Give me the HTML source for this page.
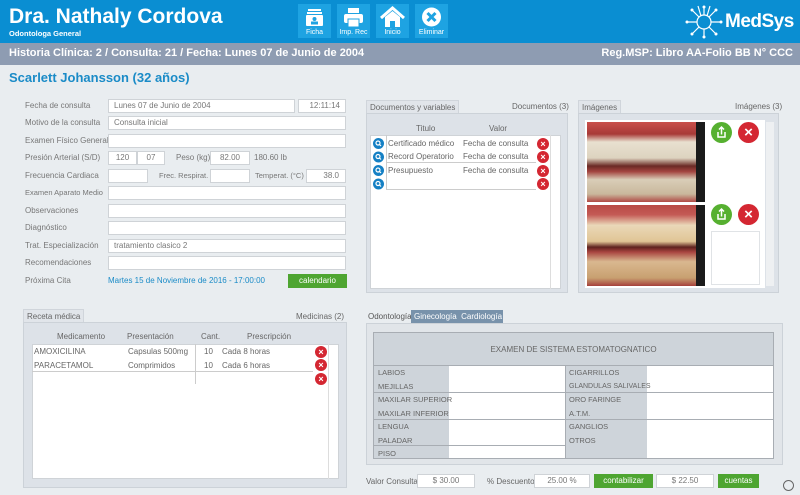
<!DOCTYPE html>
<html><head><meta charset="utf-8"><style>
*{box-sizing:border-box;margin:0;padding:0}
body{width:800px;height:495px;overflow:hidden;background:#e9edf0;font-family:"Liberation Sans",sans-serif;position:relative;color:#555}
.a{position:absolute;white-space:nowrap}
.hdr{left:0;top:0;width:800px;height:43px;background:#0a8ed2}
.bar{left:0;top:43px;width:800px;height:22px;background:#8e9cb2;color:#fff;font-weight:bold;font-size:11px;line-height:21px}
.btn{top:4px;width:33px;height:34px;background:#1ea3e2;color:#fff;font-size:7px;text-align:center}
.btn span{position:absolute;bottom:2px;left:0;width:100%}
.lbl{font-size:8px;color:#777;left:25px}
.in{background:#fff;border:1px solid #cfd3d7;height:14px;font-size:8px;color:#777;line-height:12px;padding-left:5px}
.tab{font-size:8px;color:#666;background:#e1e5ea;border:1px solid #d0d5db;border-bottom:none;height:14px;line-height:13px;padding:0 3px}
.pan{background:#dde2e8;border:1px solid #ccd2d8}
.x{width:12px;height:12px;border-radius:50%;background:#d42732;color:#fff;font-size:9px;line-height:12px;text-align:center;font-weight:bold}
.q{width:11px;height:11px;border-radius:50%;background:#1580c4}
.t{font-size:8px;color:#666}
.tr{font-size:7.5px;color:#666;height:13.5px;line-height:13.5px;padding-left:3px;white-space:nowrap}
</style></head><body>
<div class="a hdr"></div>
<div class="a" style="left:9px;top:5px;color:#fff;font-weight:bold;font-size:21px">Dra. Nathaly Cordova</div>
<div class="a" style="left:9px;top:29px;color:#fff;font-weight:bold;font-size:7.5px">Odontologa General</div>
<div class="a btn" style="left:298px"><svg width="33" height="26" viewBox="0 0 33 26"><rect x="10" y="5" width="13" height="2" fill="#fff"/><rect x="9" y="8" width="15" height="2" fill="#fff"/><rect x="8" y="11" width="17" height="11" rx="1" fill="#fff"/><circle cx="16.5" cy="15" r="2" fill="#1ea3e2"/><rect x="13" y="17.5" width="7" height="3" fill="#1ea3e2"/></svg><span>Ficha</span></div>
<div class="a btn" style="left:337px"><svg width="33" height="26" viewBox="0 0 33 26"><rect x="11" y="4" width="11" height="5" fill="#fff"/><rect x="7" y="10" width="19" height="9" rx="2" fill="#fff"/><rect x="11" y="15" width="11" height="8" fill="#fff" stroke="#1ea3e2" stroke-width="1"/></svg><span>Imp. Rec</span></div>
<div class="a btn" style="left:376px"><svg width="33" height="26" viewBox="0 0 33 26"><path d="M5 14 L16.5 4 L28 14" stroke="#fff" stroke-width="3" fill="none"/><path d="M9 13 V23 H14 V17 H19 V23 H24 V13 L16.5 7Z" fill="#fff"/></svg><span>Inicio</span></div>
<div class="a btn" style="left:415px"><svg width="33" height="26" viewBox="0 0 33 26"><circle cx="16.5" cy="13" r="9.5" fill="#fff"/><path d="M12.5 9 L20.5 17 M20.5 9 L12.5 17" stroke="#1ea3e2" stroke-width="3"/></svg><span>Eliminar</span></div>
<svg class="a" style="left:684px;top:4px" width="40" height="36" viewBox="0 0 40 36"><g stroke="#fff" stroke-width="1.2" fill="none"><circle cx="20" cy="18" r="7"/><path d="M20 11V3M20 25V33M13 18H3M27 18H37M15 13L8 6M25 13L32 6M15 23L8 30M25 23L32 30M17 12L14 2M23 12L26 2"/></g><g fill="#fff"><circle cx="20" cy="3" r="1.5"/><circle cx="3" cy="18" r="1.5"/><circle cx="37" cy="18" r="1.5"/><circle cx="8" cy="6" r="1.5"/><circle cx="32" cy="6" r="1.5"/><circle cx="8" cy="30" r="1.5"/><circle cx="32" cy="30" r="1.5"/><circle cx="20" cy="33" r="1.5"/></g></svg>
<div class="a" style="left:725px;top:11px;color:#fff;font-weight:bold;font-size:19px;letter-spacing:-0.5px">MedSys</div>
<div class="a bar"><span style="position:absolute;left:9px">Historia Clínica: 2 / Consulta: 21 / Fecha: Lunes 07 de Junio de 2004</span><span style="position:absolute;right:7px">Reg.MSP: Libro AA-Folio BB N° CCC</span></div>
<div class="a" style="left:9px;top:70px;color:#1a8bc7;font-weight:bold;font-size:13px">Scarlett Johansson (32 años)</div>

<div class="a lbl" style="top:101px">Fecha de consulta</div><div class="a in" style="left:108px;top:99px;width:187px">Lunes 07 de Junio de 2004</div><div class="a in" style="left:298px;top:99px;width:48px;text-align:right;padding-right:5px">12:11:14</div>
<div class="a lbl" style="top:118px">Motivo de la consulta</div><div class="a in" style="left:108px;top:116px;width:238px">Consulta inicial</div>
<div class="a lbl" style="top:136px">Examen Físico General</div><div class="a in" style="left:108px;top:134px;width:238px"></div>
<div class="a lbl" style="top:153px">Presión Arterial (S/D)</div><div class="a in" style="left:108px;top:151px;width:29px;text-align:center;padding:0">120</div><div class="a in" style="left:137px;top:151px;width:28px;text-align:center;padding:0">07</div><div class="a lbl" style="left:176px;top:153px">Peso (kg)</div><div class="a in" style="left:210px;top:151px;width:40px;text-align:center;padding:0">82.00</div><div class="a lbl" style="left:254px;top:153px">180.60 lb</div>
<div class="a lbl" style="top:171px">Frecuencia Cardiaca</div><div class="a in" style="left:108px;top:169px;width:40px"></div><div class="a lbl" style="left:159px;top:171px;font-size:7.5px">Frec. Respirat.</div><div class="a in" style="left:210px;top:169px;width:40px"></div><div class="a lbl" style="left:255px;top:171px;font-size:7.5px">Temperat. (°C)</div><div class="a in" style="left:306px;top:169px;width:40px;text-align:right;padding-right:6px">38.0</div>
<div class="a lbl" style="top:188px;font-size:7.5px">Examen Aparato Medio</div><div class="a in" style="left:108px;top:186px;width:238px"></div>
<div class="a lbl" style="top:206px">Observaciones</div><div class="a in" style="left:108px;top:204px;width:238px"></div>
<div class="a lbl" style="top:223px">Diagnóstico</div><div class="a in" style="left:108px;top:221px;width:238px"></div>
<div class="a lbl" style="top:241px">Trat. Especialización</div><div class="a in" style="left:108px;top:239px;width:238px">tratamiento clasico 2</div>
<div class="a lbl" style="top:258px">Recomendaciones</div><div class="a in" style="left:108px;top:256px;width:238px"></div>
<div class="a lbl" style="top:276px">Próxima Cita</div><div class="a" style="left:108px;top:276px;font-size:8px;color:#1a8bc7">Martes 15 de Noviembre de 2016 - 17:00:00</div>
<div class="a" style="left:288px;top:274px;width:59px;height:14px;background:#4ea531;color:#fff;font-size:8px;text-align:center;line-height:14px">calendario</div>

<div class="a tab" style="left:366px;top:100px">Documentos y variables</div><div class="a t" style="left:512px;top:102px">Documentos (3)</div>
<div class="a pan" style="left:366px;top:113px;width:202px;height:180px"></div>
<div class="a t" style="left:416px;top:124px">Titulo</div><div class="a t" style="left:489px;top:124px">Valor</div>
<div class="a" style="left:370px;top:135px;width:191px;height:154px;background:#fff;border:1px solid #cfd3d7"></div>
<div class="a" style="left:550px;top:135px;width:1px;height:154px;background:#ddd"></div>
<div class="a" style="left:386px;top:135px;width:1px;height:54px;background:#ccc"></div>
<div class="a" style="left:386px;top:162px;width:150px;height:1px;background:#ccc"></div>
<div class="a" style="left:386px;top:189px;width:150px;height:1px;background:#ccc"></div>
<div class="a t" style="left:388px;top:139px">Certificado médico</div><div class="a t" style="left:463px;top:139px">Fecha de consulta</div>
<div class="a t" style="left:388px;top:152px">Record Operatorio</div><div class="a t" style="left:463px;top:152px">Fecha de consulta</div>
<div class="a t" style="left:388px;top:166px">Presupuesto</div><div class="a t" style="left:463px;top:166px">Fecha de consulta</div>
<svg class="a" style="left:373px;top:138px" width="11" height="52" viewBox="0 0 11 52"><g><circle cx="5.5" cy="5.5" r="5.5" fill="#1580c4"/><circle cx="5.5" cy="19" r="5.5" fill="#1580c4"/><circle cx="5.5" cy="32.5" r="5.5" fill="#1580c4"/><circle cx="5.5" cy="46" r="5.5" fill="#1580c4"/></g><g stroke="#fff" stroke-width="1.2" fill="none"><circle cx="5" cy="5" r="2"/><path d="M6.5 6.5L8 8"/><circle cx="5" cy="18.5" r="2"/><path d="M6.5 20L8 21.5"/><circle cx="5" cy="32" r="2"/><path d="M6.5 33.5L8 35"/><circle cx="5" cy="45.5" r="2"/><path d="M6.5 47L8 48.5"/></g></svg>
<div class="a x" style="left:537px;top:138px">×</div><div class="a x" style="left:537px;top:151px">×</div><div class="a x" style="left:537px;top:165px">×</div><div class="a x" style="left:537px;top:178px">×</div>

<div class="a tab" style="left:578px;top:100px">Imágenes</div><div class="a t" style="left:735px;top:102px">Imágenes (3)</div>
<div class="a pan" style="left:578px;top:113px;width:201px;height:180px"></div>
<div class="a" style="left:585px;top:120px;width:180px;height:168px;background:#fff"></div>
<div class="a" style="left:587px;top:122px;width:118px;height:80px;background:linear-gradient(#c9504b 0,#a83a38 15%,#e8e0d0 25%,#ddd3bf 45%,#6a2a25 55%,#a34440 62%,#d9cdb8 72%,#c9b89c 90%,#b04a45 100%);border-right:9px solid #1a1a1a"></div>
<div class="a" style="left:587px;top:205px;width:118px;height:81px;background:linear-gradient(#b84944 0,#c45a55 12%,#ead8b8 25%,#e0c595 45%,#5e231f 52%,#a8443f 58%,#d9b890 70%,#c8a070 90%,#a5403b 100%);border-right:9px solid #1a1a1a"></div>
<div class="a" style="left:766px;top:122px;width:8px;height:164px;background:#eef0f2"></div>
<svg class="a" style="left:711px;top:122px" width="21" height="21" viewBox="0 0 21 21"><circle cx="10.5" cy="10.5" r="10.5" fill="#56b030"/><path d="M7 10V15H14V10M10.5 12.5V5M8 7.5L10.5 5L13 7.5" stroke="#fff" stroke-width="1.5" fill="none"/></svg>
<div class="a x" style="left:738px;top:122px;width:21px;height:21px;line-height:21px;font-size:15px">×</div>
<svg class="a" style="left:711px;top:204px" width="21" height="21" viewBox="0 0 21 21"><circle cx="10.5" cy="10.5" r="10.5" fill="#56b030"/><path d="M7 10V15H14V10M10.5 12.5V5M8 7.5L10.5 5L13 7.5" stroke="#fff" stroke-width="1.5" fill="none"/></svg>
<div class="a x" style="left:738px;top:204px;width:21px;height:21px;line-height:21px;font-size:15px">×</div>
<div class="a" style="left:711px;top:231px;width:49px;height:54px;background:#fff;border:1px solid #e0e3e6"></div>

<div class="a tab" style="left:23px;top:309px">Receta médica</div><div class="a t" style="left:296px;top:312px">Medicinas (2)</div>
<div class="a pan" style="left:23px;top:322px;width:324px;height:166px"></div>
<div class="a t" style="left:57px;top:332px">Medicamento</div><div class="a t" style="left:127px;top:332px">Presentación</div><div class="a t" style="left:201px;top:332px">Cant.</div><div class="a t" style="left:247px;top:332px">Prescripción</div>
<div class="a" style="left:32px;top:344px;width:307px;height:135px;background:#fff;border:1px solid #cfd3d7"></div>
<div class="a" style="left:32px;top:371px;width:281px;height:1px;background:#ccc"></div>
<div class="a" style="left:195px;top:344px;width:1px;height:40px;background:#ccc"></div>
<div class="a" style="left:328px;top:344px;width:1px;height:135px;background:#ddd"></div>
<div class="a t" style="left:34px;top:347px">AMOXICILINA</div><div class="a t" style="left:128px;top:347px">Capsulas 500mg</div><div class="a t" style="left:204px;top:347px">10</div><div class="a t" style="left:222px;top:347px">Cada 8 horas</div>
<div class="a t" style="left:34px;top:361px">PARACETAMOL</div><div class="a t" style="left:128px;top:361px">Comprimidos</div><div class="a t" style="left:204px;top:361px">10</div><div class="a t" style="left:222px;top:361px">Cada 6 horas</div>
<div class="a x" style="left:315px;top:346px">×</div><div class="a x" style="left:315px;top:359px">×</div><div class="a x" style="left:315px;top:373px">×</div>

<div class="a" style="left:366px;top:310px;height:13px;font-size:8px;color:#555;line-height:13px;padding:0 2px">Odontología</div>
<div class="a" style="left:411px;top:310px;width:92px;height:13px;background:#7892ab;color:#fff;font-size:8px;line-height:13px;padding-left:3px">Ginecología &nbsp;Cardiología</div>
<div class="a pan" style="left:366px;top:323px;width:417px;height:142px;background:#e1e5e9"></div>
<div class="a" style="left:373px;top:332px;width:401px;height:127px;background:#fff;border:1px solid #a8adb3"></div>
<div class="a" style="left:374px;top:333px;width:399px;height:33px;background:#ced4da;border-bottom:1px solid #a8adb3;font-size:8px;color:#666;text-align:center;line-height:33px">EXAMEN DE SISTEMA ESTOMATOGNATICO</div>
<div class="a" style="left:374px;top:366px;width:75px;height:92px;background:#ced4da"></div>
<div class="a" style="left:566px;top:366px;width:81px;height:92px;background:#ced4da"></div>
<div class="a" style="left:565px;top:366px;width:1px;height:92px;background:#a8adb3"></div>
<div class="a" style="left:374px;top:392px;width:399px;height:1px;background:#a8adb3"></div>
<div class="a" style="left:374px;top:419px;width:399px;height:1px;background:#a8adb3"></div>
<div class="a" style="left:374px;top:445px;width:191px;height:1px;background:#a8adb3"></div>
<div class="a" style="left:375px;top:366px;width:80px">
<div class="tr">LABIOS</div><div class="tr">MEJILLAS</div><div class="tr">MAXILAR SUPERIOR</div><div class="tr">MAXILAR INFERIOR</div><div class="tr">LENGUA</div><div class="tr">PALADAR</div><div class="tr">PISO</div></div>
<div class="a" style="left:566px;top:366px;width:90px">
<div class="tr">CIGARRILLOS</div><div class="tr" style="font-size:7px">GLANDULAS SALIVALES</div><div class="tr">ORO FARINGE</div><div class="tr">A.T.M.</div><div class="tr">GANGLIOS</div><div class="tr">OTROS</div></div>

<div class="a t" style="left:366px;top:477px">Valor Consulta</div>
<div class="a in" style="left:417px;top:474px;width:58px;text-align:center;padding:0">$ 30.00</div>
<div class="a t" style="left:487px;top:477px">% Descuento</div>
<div class="a in" style="left:534px;top:474px;width:56px;text-align:center;padding:0">25.00 %</div>
<div class="a" style="left:594px;top:474px;width:59px;height:14px;background:#4ea531;color:#fff;font-size:8px;text-align:center;line-height:14px">contabilizar</div>
<div class="a in" style="left:656px;top:474px;width:58px;text-align:center;padding:0">$ 22.50</div>
<div class="a" style="left:718px;top:474px;width:41px;height:14px;background:#4ea531;color:#fff;font-size:8px;text-align:center;line-height:14px">cuentas</div>
<div class="a" style="left:783px;top:480px;width:11px;height:11px;border-radius:50%;border:1px solid #666"></div>
</body></html>
